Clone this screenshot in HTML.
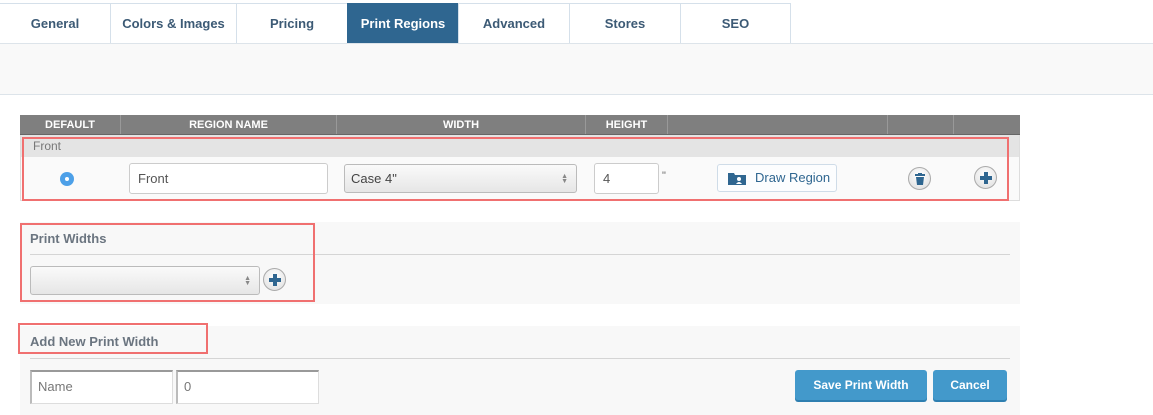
<!DOCTYPE html>
<html><head><meta charset="utf-8"><style>
*{box-sizing:border-box;margin:0;padding:0}
body{width:1153px;height:415px;background:#fff;font-family:"Liberation Sans",sans-serif;position:relative;overflow:hidden;color:#555}
.a{position:absolute}
.tab{position:absolute;top:3px;height:41px;border:1px solid #d5e0ea;border-bottom:none;font-size:13px;font-weight:bold;color:#3c5a75;text-align:center;line-height:39px;background:#fff}
.th{position:absolute;top:115px;height:19px;border-right:1px solid #999;color:#fff;font-size:11px;font-weight:bold;text-align:center;line-height:21px}
.inp{position:absolute;background:#fff;border:1px solid #ccc;border-radius:3px;font-size:13px;color:#555;padding-left:8px}
.sel{position:absolute;border:1px solid #bbb;border-radius:3px;background:linear-gradient(#fafafa,#e6e6e6);font-size:13px;color:#444;padding-left:6px}
.arr{position:absolute;right:8px;top:50%;transform:translateY(-50%);font-size:7px;line-height:5px;color:#888}
.circ{position:absolute;width:23px;height:23px;border-radius:50%;border:1px solid #aaa;background:radial-gradient(circle at 50% 35%,#fff,#ddd);}
.btn{position:absolute;color:#fff;background:#4399cb;border-radius:3px;font-size:12px;font-weight:bold;text-align:center;box-shadow:0 2px 0 #2e7fb0}
.red{position:absolute;border:2px solid #f07070}
</style></head><body>
<div class="tab" style="left:-1px;width:112px">General</div>
<div class="tab" style="left:110px;width:127px">Colors &amp; Images</div>
<div class="tab" style="left:236px;width:112px">Pricing</div>
<div class="tab" style="left:347px;width:112px;background:#2f6690;color:#fff;border-color:#2f6690">Print Regions</div>
<div class="tab" style="left:458px;width:112px">Advanced</div>
<div class="tab" style="left:569px;width:112px">Stores</div>
<div class="tab" style="left:680px;width:111px">SEO</div>
<div class="a" style="left:0;top:43px;width:1153px;height:52px;background:#f9f9f9;border-top:1px solid #dde4ea;border-bottom:1px solid #dde4ea"></div>

<div class="a" style="left:20px;top:115px;width:1000px;height:86px;border:1px solid #ddd;background:#fafafa"></div>
<div class="a" style="left:20px;top:115px;width:1000px;height:20px;background:#7f7f7f;border-bottom:1px solid #666"></div>
<div class="th" style="left:20px;width:101px">DEFAULT</div>
<div class="th" style="left:121px;width:216px">REGION NAME</div>
<div class="th" style="left:337px;width:249px">WIDTH</div>
<div class="th" style="left:586px;width:82px">HEIGHT</div>
<div class="th" style="left:668px;width:220px"></div>
<div class="th" style="left:888px;width:66px"></div>
<div class="a" style="left:21px;top:135px;width:998px;height:22px;background:#e4e4e4"></div>
<div class="a" style="left:33px;top:139px;font-size:12px;color:#777">Front</div>
<div class="a" style="left:60px;top:172px;width:14px;height:14px;border-radius:50%;background:#4da0e8"><div class="a" style="left:5px;top:5px;width:4px;height:4px;border-radius:50%;background:#fff"></div></div>
<div class="inp" style="left:129px;top:163px;width:199px;height:31px;line-height:29px">Front</div>
<div class="sel" style="left:344px;top:164px;width:233px;height:29px;line-height:27px">Case 4"<div class="arr">▲<br>▼</div></div>
<div class="inp" style="left:594px;top:163px;width:65px;height:31px;line-height:29px">4</div>
<div class="a" style="left:662px;top:170px;font-size:11px;color:#666">"</div>
<div class="a" style="left:717px;top:164px;width:120px;height:28px;border:1px solid #cfdce8;border-radius:3px;background:#fcfdfe;color:#2f6690;font-size:13px;line-height:26px;padding-left:37px">Draw Region
<svg class="a" style="left:10px;top:7px" width="18" height="13" viewBox="0 0 18 13"><path d="M0 1h6l1 2h11v10H0z" fill="#2f6690"/><circle cx="11" cy="7" r="2" fill="#fff"/><path d="M8 12q3-4 6 0z" fill="#fff"/></svg></div>
<div class="circ" style="left:908px;top:167px"><svg class="a" style="left:6px;top:5px" width="10" height="12" viewBox="0 0 10 12"><rect x="0" y="1" width="10" height="2" fill="#2f6690"/><rect x="3" y="0" width="4" height="2" fill="#2f6690"/><path d="M1 4h8l-1 8H2z" fill="#2f6690"/></svg></div>
<div class="circ" style="left:974px;top:166px"><svg class="a" style="left:5px;top:5px" width="12" height="12"><path d="M4 0h4v4h4v4H8v4H4V8H0V4h4z" fill="#2f6690"/></svg></div>
<div class="red" style="left:22px;top:137px;width:987px;height:64px"></div>

<div class="a" style="left:20px;top:222px;width:1000px;height:82px;background:#f8f8f8"></div>
<div class="a" style="left:30px;top:231px;font-size:13px;font-weight:bold;color:#6b7580">Print Widths</div>
<div class="a" style="left:30px;top:254px;width:980px;height:1px;background:#d5d5d5"></div>
<div class="sel" style="left:30px;top:266px;width:230px;height:29px"><div class="arr">▲<br>▼</div></div>
<div class="circ" style="left:263px;top:268px"><svg class="a" style="left:5px;top:5px" width="12" height="12"><path d="M4 0h4v4h4v4H8v4H4V8H0V4h4z" fill="#2f6690"/></svg></div>
<div class="red" style="left:20px;top:223px;width:295px;height:79px"></div>

<div class="a" style="left:20px;top:326px;width:1000px;height:89px;background:#f8f8f8"></div>
<div class="a" style="left:30px;top:334px;font-size:13px;font-weight:bold;color:#6b7580">Add New Print Width</div>
<div class="red" style="left:18px;top:323px;width:190px;height:31px"></div>
<div class="a" style="left:30px;top:358px;width:980px;height:1px;background:#d5d5d5"></div>
<div class="a" style="left:30px;top:370px;width:143px;height:34px;background:#fff;border:1px solid #ddd;border-top:2px solid #999;border-left:2px solid #bbb;font-size:13px;color:#777;padding-left:6px;line-height:30px">Name</div>
<div class="a" style="left:176px;top:370px;width:143px;height:34px;background:#fff;border:1px solid #ddd;border-top:2px solid #999;border-left:2px solid #bbb;font-size:13px;color:#777;padding-left:6px;line-height:30px">0</div>
<div class="btn" style="left:795px;top:370px;width:132px;height:30px;line-height:30px">Save Print Width</div>
<div class="btn" style="left:933px;top:370px;width:74px;height:30px;line-height:30px">Cancel</div>
</body></html>
